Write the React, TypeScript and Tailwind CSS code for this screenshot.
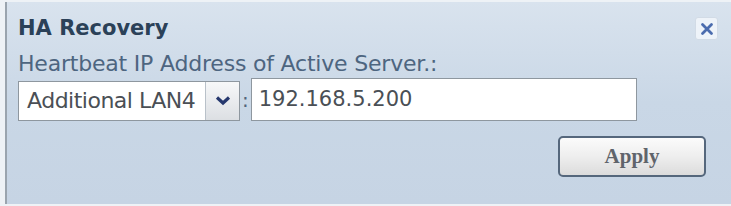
import React from 'react';

export default function App() {
  return (
    <div className="w-[731px] h-[206px] bg-[#eef2f6] overflow-hidden">
      <div className="ml-[5px] h-[202px] mt-[2px] border-l-2 border-[#9aa4ae] bg-gradient-to-b from-[#d9e3ee] via-[#c9d7e6] to-[#c6d4e4] pl-[11px] pr-[10px] pt-[13px] font-['DejaVu_Sans',sans-serif]">
        <div className="flex items-start justify-between">
          <h2 className="text-[21px] font-bold leading-[26px] text-[#2b4158]">HA Recovery</h2>
          <button className="mt-[2px] mr-[3px] w-[23px] h-[23px] flex items-center justify-center rounded-[3px] bg-[#eef3f9] border border-[#d2dbe6]">
            <svg width="14" height="14" viewBox="0 0 14 14">
              <path d="M2.5 2.5 L11.5 11.5 M11.5 2.5 L2.5 11.5" stroke="#4b6cae" strokeWidth="2.8" strokeLinecap="round" />
            </svg>
          </button>
        </div>
        <div className="mt-[11px] text-[22px] leading-[24px] text-[#4d6580] tracking-[-0.2px] whitespace-nowrap">
          Heartbeat IP Address of Active Server.:
        </div>
        <div className="mt-[2px] flex items-center">
          <div className="flex h-[40px] w-[222px] mt-[2px] border border-[#8e979f] bg-white">
            <div className="flex-1 flex items-center pl-[8px] text-[22px] text-[#4a4f55] tracking-[-0.5px] whitespace-nowrap">
              Additional LAN4
            </div>
            <div className="w-[34px] shrink-0 flex items-center justify-center border-l border-[#b9c1c9] bg-gradient-to-b from-[#f7f8f9] to-[#dcdfe3]">
              <svg width="16" height="11" viewBox="0 0 16 11">
                <path d="M2 2.5 L8 8 L14 2.5" stroke="#26386e" strokeWidth="3.2" fill="none" strokeLinejoin="miter" />
              </svg>
            </div>
          </div>
          <span className="mx-[2px] text-[20px] text-[#52647a] leading-none">:</span>
          <div className="flex h-[43px] w-[386px] items-center border border-[#8e979f] bg-white pl-[7px] text-[21px] text-[#4a4f55]">
            192.168.5.200
          </div>
        </div>
        <div className="mt-[15px] flex justify-end pr-[15px]">
          <button className="w-[148px] h-[41px] rounded-[5px] border-2 border-[#55677c] bg-gradient-to-b from-[#fbfbfb] via-[#eeeeee] to-[#dcdcdc] font-['Liberation_Serif',serif] font-semibold text-[21px] text-[#5f646b]">
            Apply
          </button>
        </div>
      </div>
    </div>
  );
}
